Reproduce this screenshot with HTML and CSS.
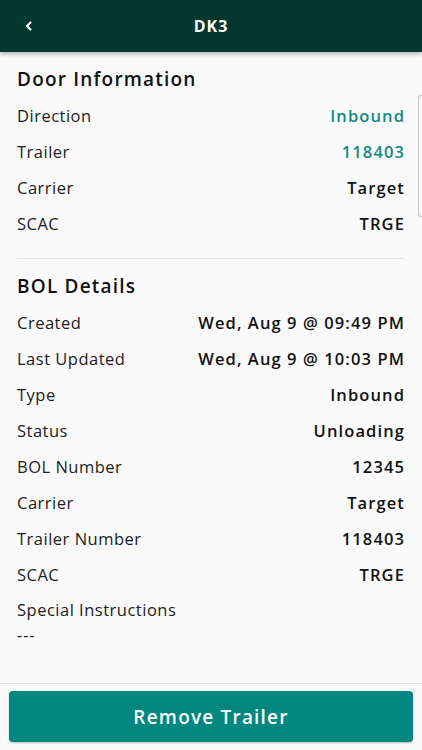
FILE: index.html
```html
<!DOCTYPE html>
<html>
    <head>
        <meta charset="utf-8">
        <title>DK3</title>
        <link rel="stylesheet" href="styles.css">
    </head>
    <body>
        <div class="screen">
            <div class="topbar">
                <span class="back">
                    <svg width="12" height="12" viewBox="0 0 12 12"><path d="M7.5 2.5 L4 6 L7.5 9.5" fill="none" stroke="#fff" stroke-width="2.2" stroke-linecap="round" stroke-linejoin="round"/></svg>
                </span>
                <span class="title">DK3</span>
            </div>

            <div class="content">
                <div class="scroll-thumb"></div>
                <div class="section">
                    <div class="section-title">Door Information</div>
                    <div class="row"><span class="label">Direction</span><span class="value teal">Inbound</span></div>
                    <div class="row"><span class="label">Trailer</span><span class="value teal">118403</span></div>
                    <div class="row"><span class="label">Carrier</span><span class="value">Target</span></div>
                    <div class="row"><span class="label">SCAC</span><span class="value">TRGE</span></div>
                </div>
                <div class="section">
                    <div class="section-title">BOL Details</div>
                    <div class="row"><span class="label">Created</span><span class="value">Wed, Aug 9 @ 09:49 PM</span></div>
                    <div class="row"><span class="label">Last Updated</span><span class="value">Wed, Aug 9 @ 10:03 PM</span></div>
                    <div class="row"><span class="label">Type</span><span class="value">Inbound</span></div>
                    <div class="row"><span class="label">Status</span><span class="value">Unloading</span></div>
                    <div class="row"><span class="label">BOL Number</span><span class="value">12345</span></div>
                    <div class="row"><span class="label">Carrier</span><span class="value">Target</span></div>
                    <div class="row"><span class="label">Trailer Number</span><span class="value">118403</span></div>
                    <div class="row"><span class="label">SCAC</span><span class="value">TRGE</span></div>
                    <div class="note">
                        <div class="label">Special Instructions</div>
                        <div class="note-text">---</div>
                    </div>
                </div>
            </div>

            <div class="footer">
                <button class="remove-button">Remove Trailer</button>
            </div>
        </div>
    </body>
</html>
```

FILE: styles.css
```css
html, body {
    margin: 0;
    padding: 0;
}
body {
    font-family: "Open Sans", "Noto Sans", sans-serif;
    color: #111;
    background: #fafafa;
}
.screen {
    width: 422px;
    height: 750px;
    display: flex;
    flex-direction: column;
    background: #fafafa;
}
.topbar {
    height: 52px;
    flex-shrink: 0;
    background-color: #03372f;
    display: flex;
    align-items: center;
    justify-content: center;
    position: relative;
    box-shadow: 0 2px 5px rgba(0, 0, 0, 0.3);
    z-index: 2;
}
.back {
    position: absolute;
    left: 23px;
    top: 20px;
    line-height: 0;
}
.title {
    color: #fff;
    font-size: 16px;
    font-weight: 700;
    letter-spacing: 1px;
}
.content {
    flex: 1;
    padding: 9px 17px 0 17px;
    position: relative;
}
.scroll-thumb {
    position: absolute;
    right: 0;
    top: 43px;
    width: 3px;
    height: 120px;
    border: 1px solid #c4c4c4;
    border-right: none;
    border-radius: 3px 0 0 3px;
}
.section {
    padding-bottom: 17px;
}
.section + .section {
    border-top: 1px solid #e2e2e2;
    padding-top: 9px;
}
.section-title {
    height: 36px;
    line-height: 36px;
    font-size: 19px;
    font-weight: 600;
    letter-spacing: 1.2px;
}
.row {
    height: 36px;
    display: flex;
    align-items: center;
    justify-content: space-between;
}
.label {
    font-size: 16.5px;
    letter-spacing: 0.5px;
    color: #1c1c1c;
}
.value {
    font-size: 16.5px;
    font-weight: 600;
    letter-spacing: 1.1px;
    color: #111;
}
.teal {
    color: #118a81;
}
.note {
    padding-top: 6px;
}
.note-text {
    font-size: 16px;
    line-height: 20px;
    margin-top: 4px;
    letter-spacing: 1px;
}
.footer {
    flex-shrink: 0;
    border-top: 1px solid #dcdcdc;
    padding: 7px 9px 8px 9px;
    background: #fafafa;
}
.remove-button {
    width: 100%;
    height: 51px;
    border: none;
    border-radius: 4px;
    background-color: #00877f;
    color: #fff;
    font-family: "Open Sans", "Noto Sans", sans-serif;
    font-size: 19px;
    font-weight: 600;
    letter-spacing: 1.2px;
    box-shadow: 0 1px 2px rgba(0, 0, 0, 0.25);
}
```
